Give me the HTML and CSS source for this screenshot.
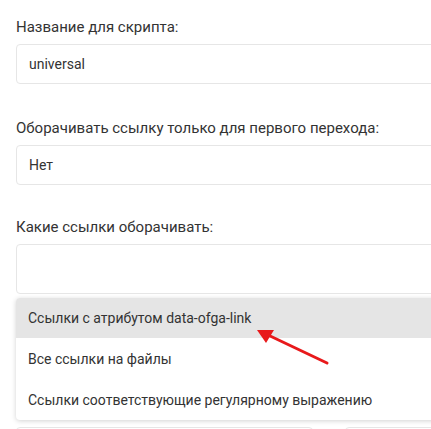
FILE: index.html
```html
<!DOCTYPE html>
<html lang="ru">
<head>
  <meta charset="UTF-8" />
  <title>Настройки скрипта</title>
  <link rel="stylesheet" href="styles.css">
</head>
<body>
  <div class="form">
    <div class="field">
      <label class="label">Название для скрипта:</label>
      <div class="input">universal</div>
    </div>

    <div class="field">
      <label class="label">Оборачивать ссылку только для первого перехода:</label>
      <div class="input">Нет</div>
    </div>

    <div class="field field-multi">
      <label class="label">Какие ссылки оборачивать:</label>
      <div class="input input-multi"></div>

      <ul class="dropdown">
        <li class="active">Ссылки с атрибутом data-ofga-link</li>
        <li>Все ссылки на файлы</li>
        <li>Ссылки соответствующие регулярному выражению</li>
      </ul>
    </div>

    <div class="row">
      <div class="input input-half"></div>
      <div class="input input-rest"></div>
    </div>
  </div>

  <!-- стрелка-пометка поверх скриншота -->
  <svg class="arrow" width="431" height="429" viewBox="0 0 431 429">
    <line x1="327" y1="363" x2="268" y2="335" stroke="#e8191b" stroke-width="3" stroke-linecap="round" />
    <polygon points="257,330 274,330 266,343" fill="#e8191b" />
  </svg>
</body>
</html>
```

FILE: styles.css
```css
* {
  margin: 0;
  padding: 0;
  box-sizing: border-box;
}

body {
  font-family: Roboto, 'Liberation Sans', sans-serif;
  font-size: 14px;
  line-height: 20px;
  color: #333;
  background: #fff;
  overflow: hidden;
}

.form {
  width: 640px;
  padding: 17px 0 0 16px;
}

.field {
  margin-bottom: 34px;
}

.field:nth-child(2) {
  margin-bottom: 32px;
}

.label {
  display: block;
  font-size: 15px;
  margin-bottom: 7px;
}

.input {
  height: 40px;
  padding: 9px 12px;
  border: 1px solid #e6e6e6;
  border-radius: 4px;
  background: #fff;
}

.field-multi {
  position: relative;
  margin-bottom: 0;
}

.input-multi {
  height: 50px;
}

.dropdown {
  list-style: none;
  position: absolute;
  top: 81px;
  left: 0;
  right: 0;
  background: #fff;
  border-radius: 4px;
  box-shadow: 0 1px 5px rgba(0, 0, 0, 0.18);
  overflow: hidden;
  z-index: 10;
}

.dropdown li {
  height: 41px;
  padding: 11px 12px 10px;
}

.dropdown li.active {
  background: #e5e5e5;
  height: 40px;
  padding-top: 10px;
}

.row {
  display: flex;
  gap: 32px;
  margin-top: 133px;
}

.input-half {
  width: 297px;
  flex: none;
}

.input-rest {
  flex: 1;
}

.arrow {
  position: absolute;
  top: 0;
  left: 0;
  z-index: 20;
}
```
